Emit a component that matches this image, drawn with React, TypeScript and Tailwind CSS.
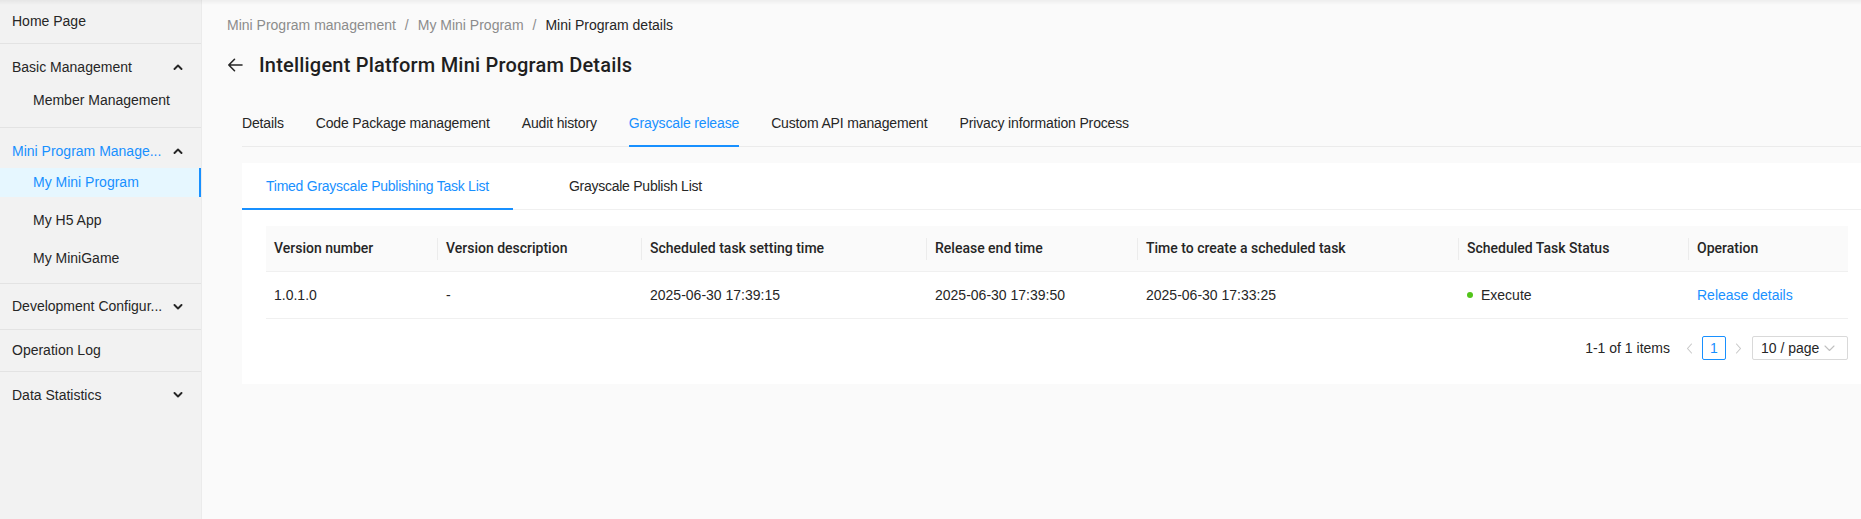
import React from "react";

function Caret({ up }: { up?: boolean }) {
  return (
    <svg width="10" height="6" viewBox="0 0 10 6" className="shrink-0">
      <path
        d={up ? "M1.5 5 L5 1.5 L8.5 5" : "M1.5 1 L5 4.5 L8.5 1"}
        fill="none"
        stroke="currentColor"
        strokeWidth="1.9"
        strokeLinecap="round"
        strokeLinejoin="round"
      />
    </svg>
  );
}

function ThinChevron({ dir }: { dir: "left" | "right" | "down" }) {
  const d =
    dir === "left"
      ? "M6.5 1 L2.5 5.5 L6.5 10"
      : dir === "right"
      ? "M3.5 1 L7.5 5.5 L3.5 10"
      : "M1 3 L5.5 7.5 L10 3";
  return (
    <svg width="11" height="11" viewBox="0 0 11 11">
      <path d={d} fill="none" stroke="currentColor" strokeWidth="1.1" strokeLinecap="round" strokeLinejoin="round" />
    </svg>
  );
}

function Sidebar() {
  return (
    <aside className="w-[202px] shrink-0 h-full bg-[#f2f2f2] border-r border-[#ebebeb] text-[14px] text-[#262626]">
      <div className="h-[44px] border-b border-[#e3e3e3] pl-[12px] flex items-center">Home Page</div>

      <div className="border-b border-[#e3e3e3] pb-[12px]">
        <div className="h-[42px] pt-[13px] pl-[12px] pr-[18px] flex items-start justify-between">
          <span className="leading-[20px]">Basic Management</span>
          <span className="mt-[7px]"><Caret up /></span>
        </div>
        <div className="h-[29px] pl-[33px] flex items-center">Member Management</div>
      </div>

      <div className="border-b border-[#e3e3e3] pb-[10px]">
        <div className="h-[40px] pt-[13px] pl-[12px] pr-[18px] flex items-start justify-between text-[#1890ff]">
          <span className="leading-[20px]">Mini Program Manage...</span>
          <span className="mt-[7px] text-[#262626]"><Caret up /></span>
        </div>
        <div className="h-[29px] pl-[33px] flex items-center bg-[#e6f7ff] text-[#1890ff] border-r-2 border-[#1890ff]">
          My Mini Program
        </div>
        <div className="h-[29px] mt-[9px] pl-[33px] flex items-center">My H5 App</div>
        <div className="h-[29px] mt-[9px] pl-[33px] flex items-center">My MiniGame</div>
      </div>

      <div className="h-[46px] border-b border-[#e3e3e3] pl-[12px] pr-[18px] flex items-center justify-between">
        <span>Development Configur...</span>
        <Caret />
      </div>
      <div className="h-[42px] border-b border-[#e3e3e3] pl-[12px] flex items-center">Operation Log</div>
      <div className="h-[46px] pl-[12px] pr-[18px] flex items-center justify-between">
        <span>Data Statistics</span>
        <Caret />
      </div>
    </aside>
  );
}

const cols = [
  "Version number",
  "Version description",
  "Scheduled task setting time",
  "Release end time",
  "Time to create a scheduled task",
  "Scheduled Task Status",
  "Operation",
];

function Table() {
  return (
    <div className="w-full">
      <div className="grid grid-cols-[172px_204px_285px_211px_321px_230px_159px] h-[46px] bg-[#fafafa] border-b border-[#f0f0f0]">
        {cols.map((c, i) => (
          <div
            key={c}
            className="relative flex items-center px-[8px] font-['Roboto',Arial,sans-serif] font-medium text-[#262626] whitespace-nowrap"
          >
            {c}
            {i < cols.length - 1 && (
              <span className="absolute right-0 top-1/2 -translate-y-1/2 w-px h-[22px] bg-[#ececec]" />
            )}
          </div>
        ))}
      </div>
      <div className="grid grid-cols-[172px_204px_285px_211px_321px_230px_159px] h-[47px] border-b border-[#f0f0f0] text-[#262626]">
        <div className="flex items-center px-[8px]">1.0.1.0</div>
        <div className="flex items-center px-[8px]">-</div>
        <div className="flex items-center px-[8px]">2025-06-30 17:39:15</div>
        <div className="flex items-center px-[8px]">2025-06-30 17:39:50</div>
        <div className="flex items-center px-[8px]">2025-06-30 17:33:25</div>
        <div className="flex items-center px-[8px] gap-[8px]">
          <span className="w-[6px] h-[6px] rounded-full bg-[#52c41a]" />
          <span>Execute</span>
        </div>
        <div className="flex items-center px-[8px] text-[#1890ff]">Release details</div>
      </div>
    </div>
  );
}

function Pagination() {
  return (
    <div className="flex justify-end items-center mt-[17px] h-[24px] text-[#262626]">
      <span className="mr-[8px] leading-[24px]">1-1 of 1 items</span>
      <span className="w-[24px] h-[24px] flex items-center justify-center text-[#c8c8c8]">
        <ThinChevron dir="left" />
      </span>
      <span className="w-[24px] h-[24px] flex items-center justify-center border border-[#1890ff] rounded-[2px] text-[#1890ff]">
        1
      </span>
      <span className="w-[24px] h-[24px] flex items-center justify-center text-[#c8c8c8]">
        <ThinChevron dir="right" />
      </span>
      <div className="ml-[2px] w-[96px] h-[24px] border border-[#d9d9d9] rounded-[2px] flex items-center justify-between pl-[8px] pr-[12px]">
        <span>10 / page</span>
        <span className="text-[#c0c0c0] flex items-center">
          <ThinChevron dir="down" />
        </span>
      </div>
    </div>
  );
}

export default function App() {
  return (
    <div className="relative flex h-screen w-full overflow-hidden bg-[#fafafa] text-[14px] text-[#262626] font-['Liberation_Sans',Arial,sans-serif]">
      <div className="pointer-events-none absolute inset-x-0 top-0 h-[5px] bg-gradient-to-b from-[rgba(0,0,0,0.05)] to-transparent z-10" />
      <Sidebar />
      <main className="flex-1 min-w-0 pl-[25px] pt-[14px]">
        <div className="flex items-center h-[22px] leading-[22px] whitespace-nowrap">
          <span className="text-[#8c8c8c]">Mini Program management</span>
          <span className="mx-[9px] text-[#8c8c8c]">/</span>
          <span className="text-[#8c8c8c]">My Mini Program</span>
          <span className="mx-[9px] text-[#8c8c8c]">/</span>
          <span className="text-[#262626]">Mini Program details</span>
        </div>

        <div className="mt-[15px] h-[28px] flex items-center">
          <svg width="16" height="16" viewBox="0 0 16 16" className="text-[#262626]">
            <path d="M15 8 H1.8 M7.5 2.3 L1.8 8 L7.5 13.7" fill="none" stroke="currentColor" strokeWidth="1.6" strokeLinecap="round" strokeLinejoin="round" />
          </svg>
          <h1 className="ml-[16px] text-[20px] leading-[28px] tracking-[0.2px] font-['Roboto',Arial,sans-serif] font-medium text-[#1f1f1f]">
            Intelligent Platform Mini Program Details
          </h1>
        </div>

        <div className="mt-[21px] ml-[15px] flex gap-[32px] border-b border-[#ebebeb] whitespace-nowrap tracking-[-0.15px]">
          {[
            "Details",
            "Code Package management",
            "Audit history",
            "Grayscale release",
            "Custom API management",
            "Privacy information Process",
          ].map((t) => {
            const active = t === "Grayscale release";
            return (
              <div
                key={t}
                className={
                  active
                    ? "relative py-[12px] leading-[22px] text-[#1890ff]"
                    : "relative py-[12px] leading-[22px] text-[#262626]"
                }
              >
                {t}
                {active && <span className="absolute left-0 right-0 -bottom-px h-[2px] bg-[#1890ff]" />}
              </div>
            );
          })}
        </div>

        <section className="mt-[16px] ml-[15px] bg-white">
          <div className="flex gap-[32px] border-b border-[#f0f0f0] whitespace-nowrap tracking-[-0.25px]">
            <div className="relative h-[46px] px-[24px] flex items-center text-[#1890ff]">
              Timed Grayscale Publishing Task List
              <span className="absolute left-0 right-0 -bottom-px h-[2px] bg-[#1890ff]" />
            </div>
            <div className="relative h-[46px] px-[24px] flex items-center text-[#262626]">
              Grayscale Publish List
            </div>
          </div>
          <div className="pt-[16px] pl-[24px] pr-[13px] pb-[24px]">
            <Table />
            <Pagination />
          </div>
        </section>
      </main>
    </div>
  );
}
